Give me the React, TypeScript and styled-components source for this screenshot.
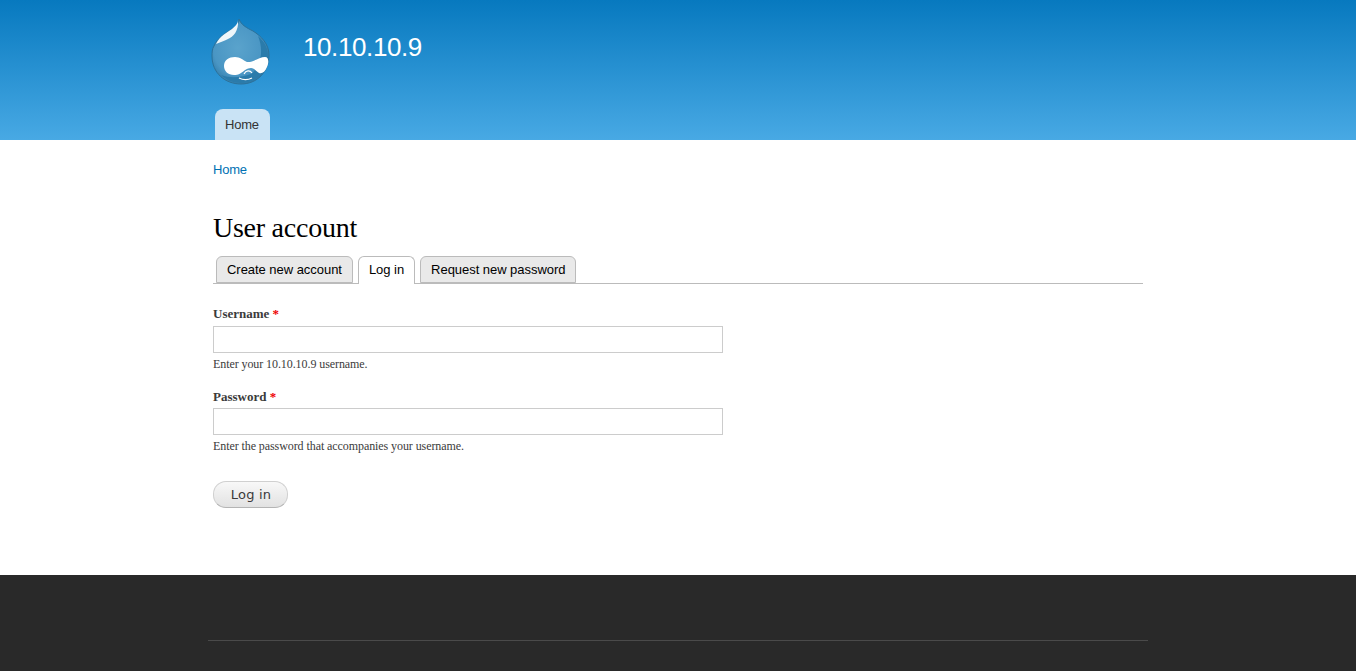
import styled, { createGlobalStyle } from 'styled-components';

const GlobalStyle = createGlobalStyle`
  html, body {
    margin: 0;
    padding: 0;
    background: #fff;
  }
  body {
    font-family: "Liberation Serif", Georgia, serif;
    font-size: 14px;
    color: #3b3b3b;
  }
`;

function DrupalLogo() {
  return (
    <svg width="62" height="68" viewBox="0 0 62 68" aria-hidden="true">
      <defs>
        <radialGradient id="drop" cx="45%" cy="45%" r="60%">
          <stop offset="0%" stopColor="#5aa3cc" />
          <stop offset="70%" stopColor="#4a96c4" />
          <stop offset="100%" stopColor="#2b76a4" />
        </radialGradient>
      </defs>
      {/* drop */}
      <path
        d="M28 1 C28 6 25 9 21 11 C15 15 6 20 3 28 C1 31 1 35 1 38 C1 55 14 66 30 66 C46 66 58 54 58 37 C58 26 50 18 42 13 C36 10 30 7 28 1 Z"
        fill="url(#drop)"
        stroke="#2c7199"
        strokeWidth="1"
      />
      {/* shine */}
      <path d="M27 2 C27 6 24 8 21 11 C15 15 9 18 5 26 C9 24 14 23 17 21 C22 19 28 13 27 2 Z" fill="#eef6fa" />
      {/* shaded side */}
      <path
        d="M47 18 C54 24 57 31 57 37 C57 53 45 65 30 65 C22 65 15 62 10 57 C20 61 32 59 40 56 C50 49 53 32 47 18 Z"
        fill="#2a7bab"
      />
      <path
        d="M13 48 C13 42 18 39 24 39 C29 39 32 42 36 44 C41 45 48 39 54 39 C58 39 58 45 56 49 C54 54 51 56 48 55 C45 53 43 50 40 50 C36 50 33 53 30 55 C27 57 25 57 23 57 C17 57 13 53 13 48 Z"
        fill="#fff"
      />
      <path d="M33 56 C35 52 39 52 41 55" fill="none" stroke="#fff" strokeWidth="1.2" />
      <path d="M28 60 C32 62 37 62 41 60" fill="none" stroke="#fff" strokeWidth="1.3" />
    </svg>
  );
}

export default function App() {
  return (
    <Page>
      <GlobalStyle />
      <Header>
        <HeaderInner>
          <Branding>
            <LogoLink href="#">
              <DrupalLogo />
            </LogoLink>
            <SiteName>10.10.10.9</SiteName>
          </Branding>
          <MainMenu>
            <MenuTab href="#">Home</MenuTab>
          </MainMenu>
        </HeaderInner>
      </Header>

      <Main>
        <Breadcrumb href="#">Home</Breadcrumb>
        <Title>User account</Title>
        <Tabs>
          <Tab href="#">Create new account</Tab>
          <Tab href="#" $active>Log in</Tab>
          <Tab href="#">Request new password</Tab>
        </Tabs>
        <Form onSubmit={(e) => e.preventDefault()}>
          <Field>
            <Label htmlFor="name">Username <Required>*</Required></Label>
            <Input id="name" type="text" />
            <Hint>Enter your 10.10.10.9 username.</Hint>
          </Field>
          <Field>
            <Label htmlFor="pass">Password <Required>*</Required></Label>
            <Input id="pass" type="password" />
            <Hint>Enter the password that accompanies your username.</Hint>
          </Field>
          <SubmitButton type="submit">Log in</SubmitButton>
        </Form>
      </Main>

      <Footer>
        <FooterRule />
      </Footer>
    </Page>
  );
}

const Page = styled.div`
  display: flex;
  flex-direction: column;
  height: 671px;
  overflow: hidden;
`;

const Header = styled.header`
  flex: 0 0 140px;
  background: linear-gradient(to bottom, #0779bf 0%, #48a9e4 100%);
`;

const HeaderInner = styled.div`
  width: 930px;
  height: 140px;
  margin: 0 auto;
  display: flex;
  flex-direction: column;
  justify-content: space-between;
`;

const Branding = styled.div`
  display: flex;
  align-items: flex-start;
  padding-top: 18px;
  margin-left: -2px;
`;

const LogoLink = styled.a`
  display: block;
  width: 62px;
  height: 68px;
  margin-right: 30px;
`;

const SiteName = styled.div`
  font-family: "Liberation Sans", Arial, sans-serif;
  font-size: 26px;
  letter-spacing: -0.4px;
  line-height: 32px;
  color: #fff;
  margin-top: 13px;
`;

const MainMenu = styled.nav`
  display: flex;
  padding-left: 2px;
`;

const MenuTab = styled.a`
  display: block;
  height: 31px;
  line-height: 31px;
  padding: 0 11px 0 10px;
  background: #c9e3f5;
  border-radius: 8px 8px 0 0;
  color: #333;
  font-family: "Liberation Sans", Arial, sans-serif;
  font-size: 13px;
  letter-spacing: -0.2px;
  text-decoration: none;
`;

const Main = styled.main`
  flex: 1;
  width: 930px;
  margin: 0 auto;
  display: flex;
  flex-direction: column;
  align-items: flex-start;
`;

const Breadcrumb = styled.a`
  font-family: "Liberation Sans", Arial, sans-serif;
  font-size: 13px;
  letter-spacing: -0.2px;
  line-height: 18px;
  color: #0071b3;
  text-decoration: none;
  margin-top: 21px;
`;

const Title = styled.h1`
  font-family: "Liberation Serif", Georgia, serif;
  font-size: 28px;
  font-weight: normal;
  letter-spacing: -0.25px;
  line-height: 34px;
  color: #000;
  margin: 32px 0 0;
`;

const Tabs = styled.div`
  align-self: stretch;
  display: flex;
  gap: 5px;
  height: 27px;
  margin-top: 11px;
  padding-left: 3px;
  border-bottom: 1px solid #bbb;
`;

const Tab = styled.a<{ $active?: boolean }>`
  display: block;
  line-height: 25px;
  padding: 0 10px;
  background: ${(p) => (p.$active ? '#fff' : '#e9e9e9')};
  border: 1px solid #bbb;
  border-bottom: ${(p) => (p.$active ? 'none' : '1px solid #bbb')};
  border-radius: 6px 6px 0 0;
  color: #000;
  font-family: "Liberation Sans", Arial, sans-serif;
  font-size: 13px;
  letter-spacing: -0.04px;
  text-decoration: none;
  height: ${(p) => (p.$active ? '27px' : '25px')};
`;

const Form = styled.form`
  display: flex;
  flex-direction: column;
  align-items: flex-start;
  margin-top: 21px;
`;

const Field = styled.div`
  display: flex;
  flex-direction: column;
  margin-bottom: 16px;
`;

const Label = styled.label`
  font-size: 13px;
  font-weight: bold;
  line-height: 17px;
  color: #3b3b3b;
  margin-bottom: 3.5px;
`;

const Required = styled.span`
  color: #e00;
`;

const Input = styled.input`
  box-sizing: border-box;
  width: 510px;
  height: 27px;
  padding: 4px;
  border: 1px solid #ccc;
  background: #fff;
  outline: none;
`;

const Hint = styled.div`
  font-size: 12px;
  letter-spacing: -0.08px;
  line-height: 16px;
  color: #3b3b3b;
  margin-top: 3px;
`;

const SubmitButton = styled.button`
  box-sizing: border-box;
  width: 75px;
  height: 27px;
  margin-top: 11px;
  padding: 0 0 1px 1px;
  border: 1px solid #d0d0d0;
  border-bottom-color: #b4b4b4;
  border-radius: 13px;
  background: linear-gradient(to bottom, #f8f8f8, #e2e2e2);
  color: #3a3a3a;
  font-family: "DejaVu Sans", Verdana, sans-serif;
  font-size: 13px;
  letter-spacing: 0.2px;
`;

const Footer = styled.footer`
  flex: 0 0 96px;
  background: #292929;
  display: flex;
  justify-content: center;
`;

const FooterRule = styled.div`
  width: 940px;
  height: 65px;
  border-bottom: 1px solid #4a4a4a;
`;
